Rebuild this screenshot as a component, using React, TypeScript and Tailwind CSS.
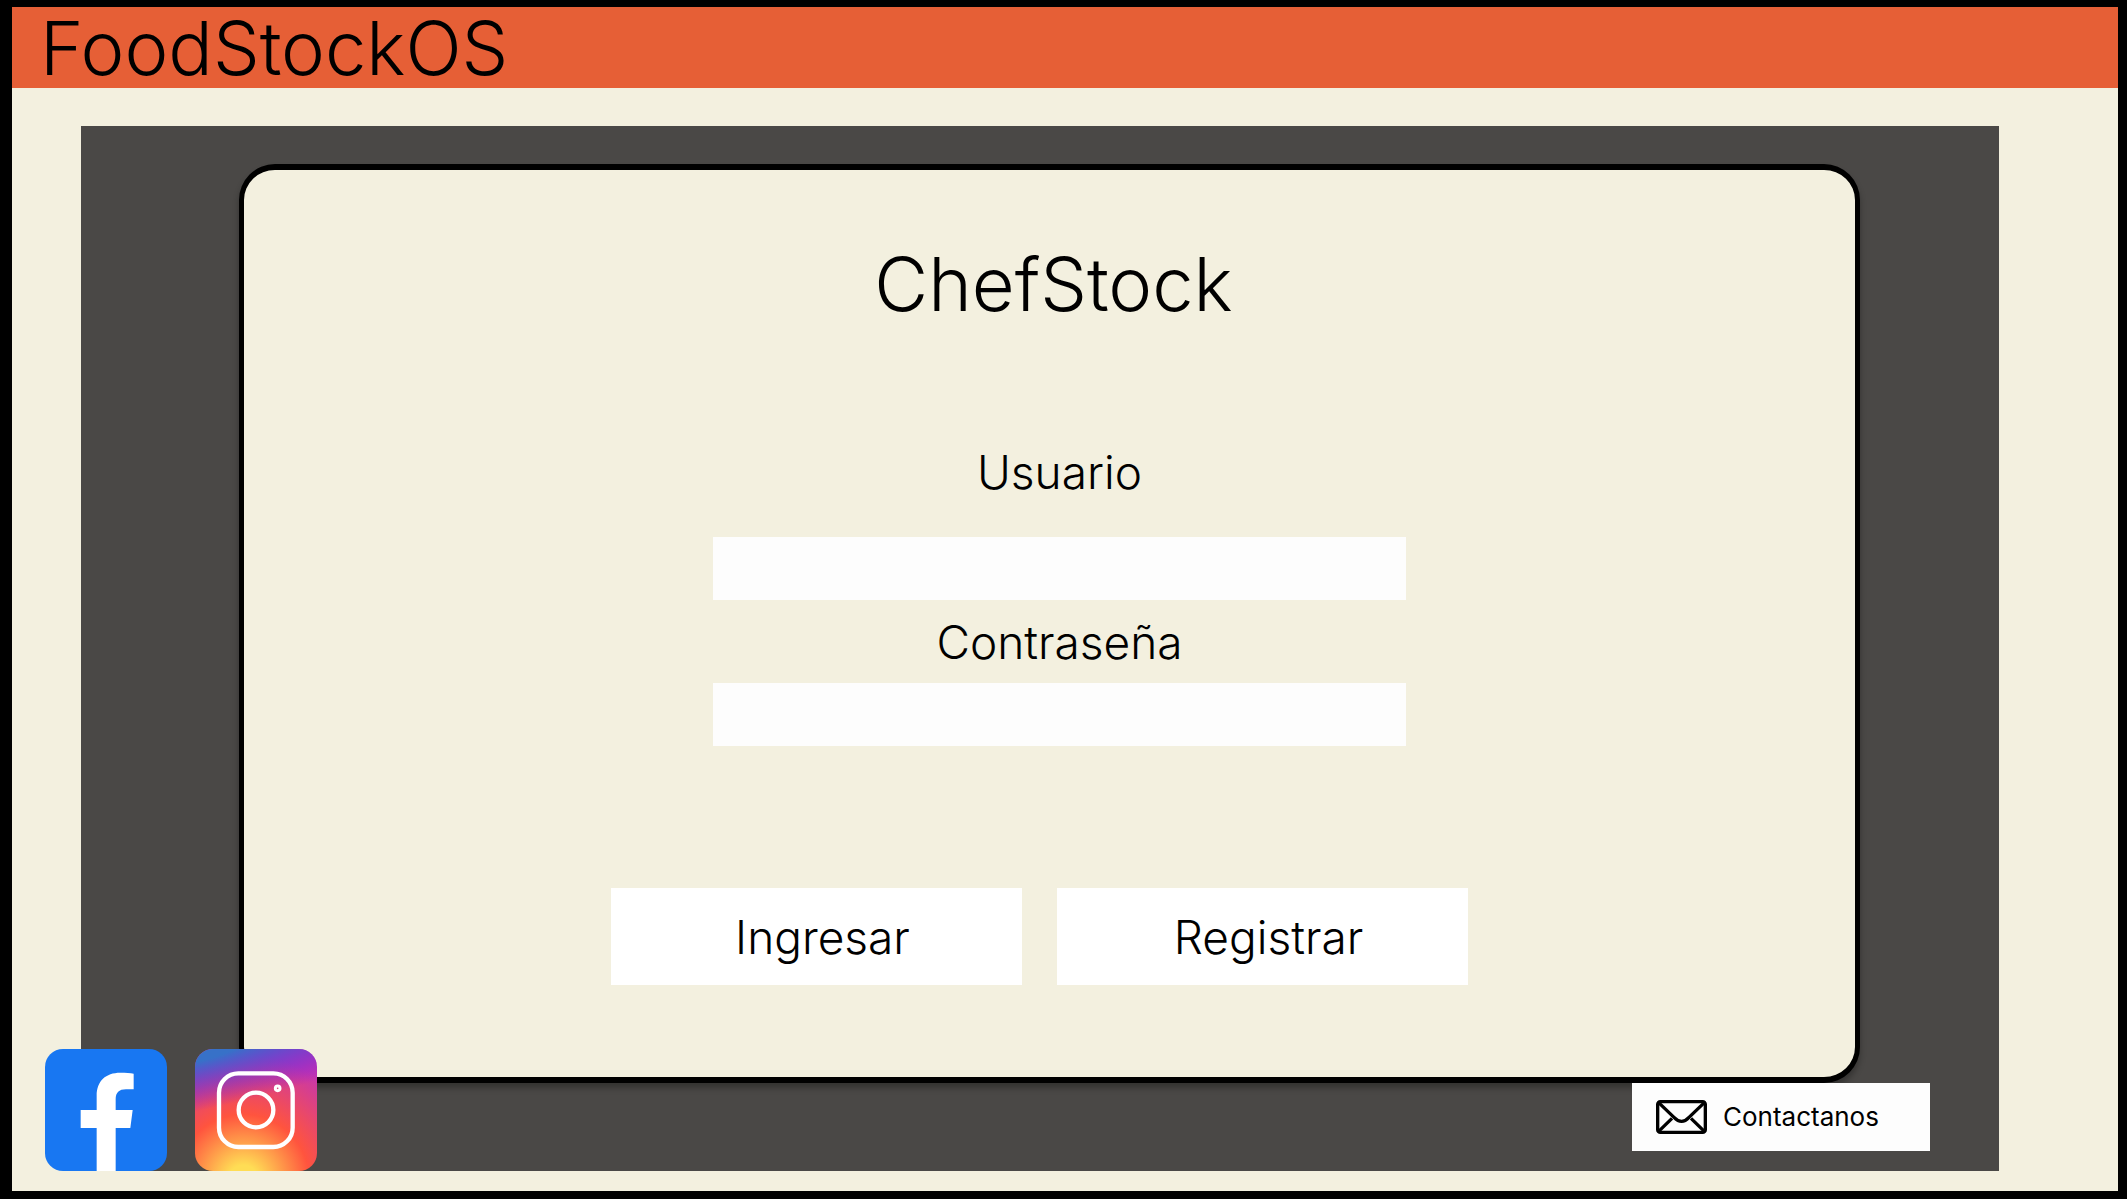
import React from "react";

function FacebookIcon() {
  return (
    <svg viewBox="0 0 366 366" className="size-full" aria-hidden="true">
      <rect width="366" height="366" rx="54" fill="#1877f2" />
      <path
        fill="#fff"
        d="M155 366V237H107V183H155V140C155 96 182 71 226 71C242 71 256 72 266 74V121H243C222 121 212 131 212 151V183H263L256 237H212V366Z"
      />
    </svg>
  );
}

function InstagramIcon() {
  return (
    <svg viewBox="0 0 366 366" className="size-full" aria-hidden="true">
      <defs>
        <radialGradient id="ig-warm" gradientUnits="userSpaceOnUse" cx="145" cy="394" r="380">
          <stop offset="0" stopColor="#ffdd55" />
          <stop offset="0.12" stopColor="#ffdd55" />
          <stop offset="0.52" stopColor="#ff543e" />
          <stop offset="1" stopColor="#c837ab" />
        </radialGradient>
        <radialGradient
          id="ig-cool"
          gradientUnits="userSpaceOnUse"
          cx="0"
          cy="0"
          r="1"
          gradientTransform="matrix(32 178 -900 190 -30 10)"
        >
          <stop offset="0" stopColor="#3771c8" />
          <stop offset="0.2" stopColor="#3771c8" />
          <stop offset="1" stopColor="#6600ff" stopOpacity="0" />
        </radialGradient>
      </defs>
      <rect width="366" height="366" rx="54" fill="url(#ig-warm)" />
      <rect width="366" height="366" rx="54" fill="url(#ig-cool)" />
      <g fill="none" stroke="#fff">
        <rect x="72" y="73" width="221" height="221" rx="58" strokeWidth="13" />
        <circle cx="183" cy="183" r="52" strokeWidth="13" />
        <circle cx="248" cy="118" r="7" strokeWidth="9" />
      </g>
    </svg>
  );
}

function EnvelopeIcon() {
  return (
    <svg
      viewBox="0 0 153 102"
      className="h-[34px] w-[51px]"
      fill="none"
      stroke="#000"
      strokeWidth="10"
      aria-hidden="true"
    >
      <rect x="5" y="5" width="143" height="92" rx="8" />
      <path d="M8 8L54 52Q77 76 99 52L145 8" />
      <path d="M8 94L48 55M145 94L105 55" />
    </svg>
  );
}

function Field({ id, label, type }: { id: string; label: string; type: string }) {
  return (
    <>
      <label htmlFor={id} className="text-[46px] leading-[52px]">
        {label}
      </label>
      <input id={id} type={type} className="h-[63px] w-full bg-[#fdfdfd] px-4 text-3xl outline-none" />
    </>
  );
}

function ActionButton({ children }: { children: React.ReactNode }) {
  return (
    <button type="button" className="h-[97px] w-[411px] bg-white pl-3 text-[46px] leading-[52px] font-light">
      {children}
    </button>
  );
}

export default function App() {
  return (
    <div className="flex min-h-screen flex-col bg-black pt-[7px] pr-[9px] pb-2 pl-3 font-['Inter',sans-serif] font-light text-black">
      <header className="flex h-[81px] items-center bg-[#e65f36] px-7">
        <h1 className="text-[74px] leading-[80px]">FoodStockOS</h1>
      </header>

      <div className="flex flex-1 flex-col bg-[#f3f0df] pt-[38px] pr-[119px] pb-5 pl-[69px]">
        <main className="relative flex flex-1 flex-col bg-[#4a4846] pt-[38px] pr-[139px] pb-[88px] pl-[158px]">
          <section className="flex flex-1 flex-col items-center rounded-[36px] border-[5px] border-t-[6px] border-b-[6px] border-black bg-[#f3f0df] pt-[74px] shadow-[0_5px_6px_rgba(0,0,0,0.3)]">
            <h2 className="pl-2 text-[74px] leading-[80px]">ChefStock</h2>

            <form className="flex flex-col items-center">
              <div className="pt-[122px] pl-5">
                <div className="flex w-[693px] flex-col items-center gap-[39px]">
                  <Field id="usuario" label="Usuario" type="text" />
                </div>
                <div className="flex w-[693px] flex-col items-center gap-[15px] pt-4">
                  <Field id="contrasena" label="Contraseña" type="password" />
                </div>
              </div>
              <div className="flex gap-[35px] pt-[142px] pr-5">
                <ActionButton>Ingresar</ActionButton>
                <ActionButton>Registrar</ActionButton>
              </div>
            </form>
          </section>

          <nav aria-label="Redes sociales" className="absolute bottom-0 -left-9 flex gap-7">
            <a href="#facebook" aria-label="Facebook" className="size-[122px]">
              <FacebookIcon />
            </a>
            <a href="#instagram" aria-label="Instagram" className="size-[122px]">
              <InstagramIcon />
            </a>
          </nav>

          <a
            href="#contacto"
            className="absolute right-[69px] bottom-5 flex h-[68px] w-[298px] items-center gap-4 bg-[#fdfdfd] pl-6 text-[26px] leading-8 font-normal"
          >
            <EnvelopeIcon />
            Contactanos
          </a>
        </main>
      </div>
    </div>
  );
}
